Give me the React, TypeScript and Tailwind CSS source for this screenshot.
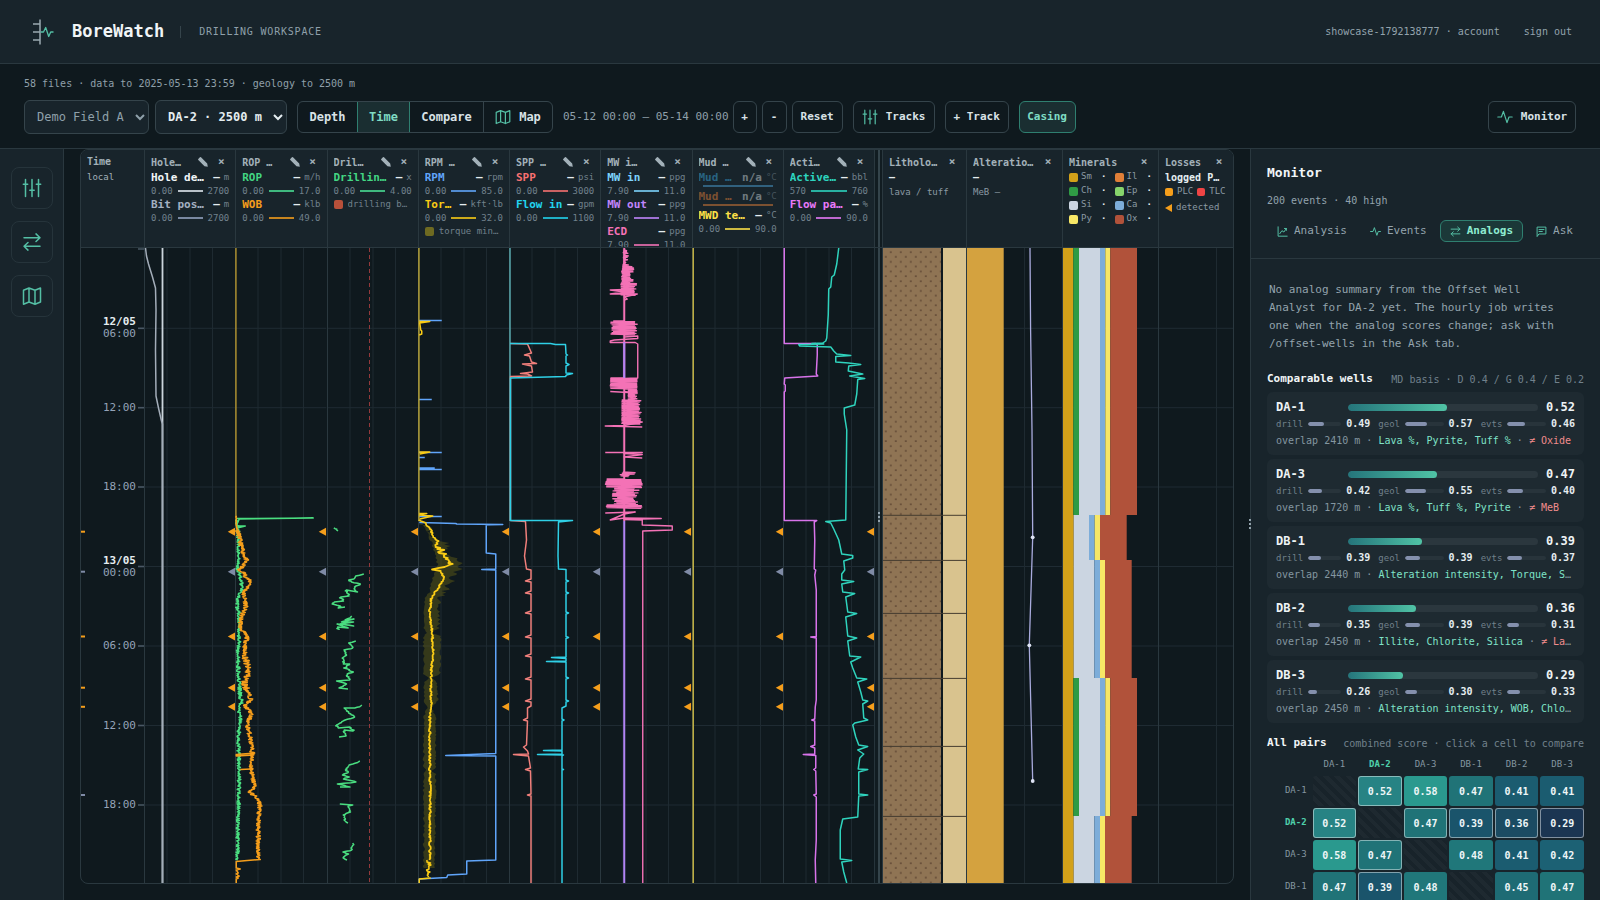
import type { ReactNode } from "react";

/* ---------- icons ---------- */

type IconProps = { className: string; weight?: number };

function Icon({ className, weight = 1.5, children }: IconProps & { children: ReactNode }) {
  return (
    <svg
      viewBox="0 0 20 20"
      fill="none"
      stroke="currentColor"
      strokeWidth={weight}
      strokeLinecap="round"
      strokeLinejoin="round"
      aria-hidden="true"
      className={`shrink-0 text-[#54bfa5] ${className}`}
    >
      {children}
    </svg>
  );
}

const SlidersIcon = (p: IconProps) => (
  <Icon {...p}>
    <path d="M3.5 1.5v17M10 1.5v17M16.5 1.5v17M1.3 6.3h4.4M7.8 12.3h4.4M14.3 6.3h4.4" />
  </Icon>
);
const SwapIcon = (p: IconProps) => (
  <Icon {...p}>
    <path d="M2 5.7h16M14 1.9l4 3.8-4 3.8M18 14.3H2M6 10.5l-4 3.8 4 3.8" />
  </Icon>
);
const MapIcon = (p: IconProps) => (
  <Icon {...p}>
    <path d="M1.5 4.2 7 2l6 2.2L18.5 2v14L13 18.200l-6-2.200-5.500 2.200zM7 2v14M13 4.200v14" />
  </Icon>
);
const PulseIcon = (p: IconProps) => (
  <Icon {...p}>
    <path d="M1 10h4.500L8 3l4.500 14L15 10h4" />
  </Icon>
);
const ChartIcon = (p: IconProps) => (
  <Icon {...p}>
    <path d="M2 1.500v17h16.500M5 14l4-5.500 3.500 2.500L17 4.500M13.500 4.500H17V8" />
  </Icon>
);
const ChatIcon = (p: IconProps) => (
  <Icon {...p}>
    <path d="M2 18.500V2h16v12.500H6zM5.500 6.500h9M5.500 10h6" />
  </Icon>
);

/* ---------- curve helpers ---------- */

type Pt = [number, number];

const TOP = 248;
const PLOT_HEIGHT = 635;
const BOTTOM = TOP + PLOT_HEIGHT;
const TICKS = [328.3, 407.7, 487, 566.5, 646, 725.5, 805];

function rng(seed: number) {
  let s = seed;
  return () => {
    s = (s * 16807) % 2147483647;
    return s / 2147483647;
  };
}

const toPath = (pts: Pt[]) => "M" + pts.map(([x, y]) => `${x.toFixed(1)} ${y.toFixed(1)}`).join("L");

function noisy(pts: Pt[], amp: number | ((y: number) => number), seed: number, step = 1): Pt[] {
  const r = rng(seed);
  const out: Pt[] = [];
  for (let i = 0; i < pts.length - 1; i++) {
    const [x1, y1] = pts[i];
    const [x2, y2] = pts[i + 1];
    const n = Math.max(1, Math.round(Math.abs(y2 - y1) / step));
    for (let k = 0; k < n; k++) {
      const y = y1 + ((y2 - y1) * k) / n;
      const a = typeof amp === "number" ? amp : amp(y);
      out.push([x1 + ((x2 - x1) * k) / n + (r() - 0.5) * 2 * a, y]);
    }
  }
  out.push(pts[pts.length - 1]);
  return out;
}

function burst(y0: number, y1: number, mid: number, left: number, right: number, fill: number, seed: number): Pt[] {
  const r = rng(seed);
  const out: Pt[] = [[mid, y0]];
  for (let y = y0; y < y1; y += 1.3) {
    out.push([mid - left * (fill + (1 - fill) * r()), y]);
    out.push([mid + right * (fill + (1 - fill) * r()), y + 0.7]);
  }
  out.push([mid, y1]);
  return out;
}

const parse = (s: string): Pt[] => s.split(" ").map((p) => p.split(",").map(Number) as Pt);

/* ---------- curves ---------- */

const bitPosition = parse("146,248 147,256 149,264 153,277 156,288 156.5,310 156,350 156.5,396 159,408 162,421 163,424 163,883");

const wob = noisy(
  parse(
    "237,516 237,525 240,537 243,550 247,560 242,568 238,570 244,572 247,577 252,583 244,593 247,605 242,617 241,628 248,637 245,650 249,673 245,683 252,700 245,705 252,713 248,725 251,737 253,753 252,760 252,767 253,777 256,787 250,792 257,797 261,805 259,817 259,858",
  ),
  (y) => (y < 530 ? 0.4 : y > 655 && y < 690 ? 3.4 : 2.2),
  11,
  0.5,
);
const wobTail = parse("259,858 261,859.500 248,860.500 237,861.500 237,868 241,869 237,870 239,873 237,874 240,876 237,877 239,878 237,879 237,883");
const rop = noisy(
  parse(
    "237,520 238,525 239,530 239,560 238,568 242,580 243,590 237.500,600 238,608 240,616 240,640 238.500,655 240,685 241,698 243,702 239,706 241,718 239,740 239.500,752 240,780 238.500,830 238.500,860",
  ),
  1.8,
  5,
  0.6,
);

const drillExponent = [
  "335,528 336,530 338,531",
  "365,574 355,576 353,579 348,580 352,582 361,584 354,587 357,592 346,590 349,596 340,597 344,601 334,602 331,604 341,606 338,608 345,607",
  "353,616 344,620 353,619 341,622 354,622 341,624 354,626 338,624 348,628 337,627 339,630",
  "357,641 348,643 353,648 345,650 346,656 343,658 344,664 349,664 345,668 353,672 346,674 350,680 336,681 347,684 340,688 348,689",
  "363,705 361,706 354,708 343,708 351,714 355,717 346,720 336,725 339,728 349,727 354,731 344,730 345,736 339,737",
  "361,761 352,764 348,765 346,770 349,772 342,775 350,777 343,779 357,782 338,784 350,787 340,787",
  "341,804 353,805 347,806 350,812 344,815 345,820 348,823",
  "354,843 350,848 352,850 344,852 348,854 343,857 347,860",
].map((s) => toPath(noisy(parse(s), 1.2, 41, 0.8)));

const rpm = parse(
  "419.500,522.500 456,523.500 457,524 503,524.500 486.500,525 486.500,553 496,554 496,569 482,569.500 496,570 496,753.500 446,755.500 496,756 496,860 467,861 467,874 448,875 447,877.500 419.500,879 419.500,883",
);
const torque = noisy(
  parse(
    "420,520 426,523 431,530 434,537 437,542 440,548 444,556 450,563 446,567 432,569.500 441,571 444,578 440,586 435,593 431,600 430,612 432,630 433,645 433,658 432,663 431,680 431.500,700 430,715 430,760 430.500,800 430,860",
  ),
  (y) => (y > 538 && y < 568 ? 4 : 1),
  23,
);
const torqueTail = noisy(parse("430,860 429,877"), 3, 8);
const torqueBand = (() => {
  const rough = (y: number) => (y < 600 ? 5 : y < 632 ? 2.5 : 1);
  const left = noisy(
    parse("424,524 430,538 435,552 438,566 432,580 430,592 425,598 424,628 428,633 424,636 424,674 429,678 424,682 424,700 427,708 424,718 424,768 427,771 424,774 424,868"),
    1.2,
    31,
    2,
  );
  const right = noisy(
    parse("424,524 436,538 447,543 444,552 463,563 454,575 449,584 444,594 440,600 439,628 431,633 441,636 440,674 432,678 437,682 438,700 432,708 436,718 436,768 432,771 436,774 435,868"),
    rough,
    37,
    1.5,
  );
  return toPath([...left, ...right.reverse()]);
})();

const flowIn = (() => {
  const head =
    "510.500,343.500 551,343.500 556,344.500 566,344.500 566.500,354 568,355 566.500,356 566.500,363 569.500,364.500 566.500,366 566.500,373 573,373.500 567,375 566,376.500 511,378 511,520.500 573,520.500 559,522 558.500,556 559,569 566.500,569.500";
  const spikes = [581, 593, 613, 637.5, 678, 701].map((y) => `566.500,${y - 1} 569,${y} 566.500,${y + 1}`);
  spikes.splice(4, 0, "566.500,657 552,657.500 566.500,658.500 566.500,661 547,661.500 566.500,662");
  return parse(
    `${head} ${spikes.join(" ")} 566.500,706 562.500,708 562.500,719 564.500,720 562.500,721 562.500,750 544,750.500 562.500,751 562.500,754 538,754.500 564,755 562.500,756 562.500,769 564,769.500 562.500,770 562.500,883`,
  );
})();
const spp = (() => {
  const spikes = [581, 593, 613, 637, 656, 679, 701].map((y) => `531.500,${y - 2} 526,${y} 531.500,${y + 1}`);
  return parse(
    `511,343.500 528,344 532,353 525,355 530,356 532,362 537,363.500 523,364 532,366 533,372 521,373.500 528,374 532,376 511,376.500 511,520.500 526,521.500 527,540 526,548 525,556 527,569 531.500,570 ${spikes.join(" ")} 531.500,706 528,708 528,718 524,720 528,721 527,745 524,747 528,751 529,754 514,754.500 529,756 531,768 526,769.500 531,771 531.500,794 528,795 531.500,796 531.500,883`,
  );
})();

const ecd = (() => {
  const mid = 625;
  return [
    burst(250, 266, mid, 1.5, 5, 0.1, 3),
    burst(266, 283, mid, 3, 10, 0.5, 4),
    burst(283, 295, mid, 4, 13, 0.7, 6),
    parse("625,289.500 611,290 625,292 611,294 638,294 625,297 628,299 625,300"),
    burst(321, 335, mid, 14, 13, 0.75, 9),
    parse("625,337 638.500,336 638.500,338.500 615,340 611,341 611,342.500 636,342.500 638.500,344 638.500,378 611,379"),
    burst(378, 389, mid, 14, 13, 0.95, 12),
    parse("611,391.500 638,393 625,392"),
    burst(389, 402, 630, 1, 8, 0.6, 13),
    burst(400, 424, mid, 2.5, 17, 0.8, 14),
    parse("625,421 643,422 625,425.500 606,426 643,427"),
    parse("606,452.500 643,452.500 625,453.500 643,454.500 625,457 643,458"),
    burst(472, 476, mid, 4, 11, 0.2, 15),
    burst(479, 487, mid, 19, 18, 0.9, 16),
    burst(487, 505, mid, 12, 15, 0.5, 18),
    burst(505, 508, mid, 19, 18, 0.9, 19),
    parse("606,513 636,512 625,514 611,520 625,518 662,518.500 625,519.500 643,520 643,525 673,526 673,530 643.500,531 643.500,883"),
  ].map(toPath);
})();

const flowPaddle = parse(
  "784.500,248 784.500,343.500 816,343.500 817.500,345 817.500,355 816.500,374 818,376 785,378 784.500,384 785.500,385 785.500,391 784.500,392 784.500,520.500 817,520.500 814.500,522 815,540 814.500,569 816,570 815,575 816.500,590 816.500,636.500 811,637 816.500,638 816.500,700 815.500,707 815,719 812,720 815,721 815,745 811,746.500 815,748 815,754 803.500,754.500 816,755.500 816,768 814,769.500 816,771 816.500,794 814,795 816.500,797 816.500,840 815.500,860 816,883",
);
const activePit = parse(
  "839,248 837,264 834.500,275 832,277 831,287 829,289 828.500,315 827,338 826,341 823,343 812,343.500 824,344 799,344.500 800,346 831,347 834,351 837,354 851,355.500 836,356.500 836,362 849,363 861,364.500 849,366 848.500,371 863,374 850,376 865,378.500 858,379.500 857,394 855,405 844.500,408 844.500,414 847,430 846,520 826,521.500 831,523 834,529 839,540 842,554 853,555.500 853,558 844,561 845,570 842,574 842,580 854,581.500 842,584 843,592 855,593.500 846,597 848,612 857,613.500 846,617 848,636 857,638 848,641 850,656 861,657 851,662 853,668 857,678 867,679 858,682 861,692 863,700 868,701 863,704 864,718 868,720 855,723 853,725 856,737 859,745 868,746.500 858,750 864,754 860,758 858.500,769 868,769.500 859,772 859,794 868,795 859,796 858,817 843,819 840.500,830 840.500,859 852,860.500 842,862 844,872 847,883",
);

/* ---------- plot building blocks ---------- */

function Curve({ d, color, width = 1.5, dash }: { d: string; color: string; width?: number; dash?: string }) {
  return (
    <path d={d} fill="none" stroke={color} strokeWidth={width} strokeDasharray={dash} strokeLinejoin="round" vectorEffect="non-scaling-stroke" />
  );
}

const vline = (x: number, from = TOP, to = BOTTOM) => `M${x} ${from}V${to}`;

function Plot({ x, width, splits = [], children }: { x: number; width: number; splits?: number[]; children?: ReactNode }) {
  return (
    <div className="relative min-h-0 min-w-0">
      <svg viewBox={`${x} ${TOP} ${width} ${PLOT_HEIGHT}`} preserveAspectRatio="none" className="absolute inset-0 h-full w-full">
        {TICKS.map((y) => (
          <Curve key={y} d={`M${x} ${y}h${width}`} color="#1f2b33" width={1} />
        ))}
        {splits.map((s) => (
          <Curve key={s} d={vline(x + s)} color="#1e2a31" width={1} />
        ))}
        <Curve d={vline(x + 0.5)} color="#2a383f" width={1} />
        {children}
      </svg>
    </div>
  );
}

const TRACK_W = 91.25;
const trackX = (i: number) => 144.5 + TRACK_W * i;
const EVENTS = [
  { y: 531.7, color: "#f59e1b" },
  { y: 571.7, color: "#7f8ba6" },
  { y: 636.5, color: "#f59e1b" },
  { y: 687.7, color: "#f59e1b" },
  { y: 706.8, color: "#f59e1b" },
];

function TrackPlot({ index, children }: { index: number; children?: ReactNode }) {
  const x = trackX(index);
  const end = x + TRACK_W - 0.2;
  return (
    <Plot x={x} width={TRACK_W} splits={[23, 46, 68.5]}>
      {children}
      {EVENTS.map((e) => (
        <path key={e.y} d={`M${end - 7.3} ${e.y}l7.300-4v8z`} fill={e.color} />
      ))}
    </Plot>
  );
}

const mineralSets = {
  rich: [
    [1063, 10.3, "#d3a119"],
    [1073.3, 5.7, "#2f9b45"],
    [1079, 21, "#cbd5e1"],
    [1100, 5.3, "#7dadd9"],
    [1105.3, 5, "#f7e766"],
    [1110.3, 26.7, "#b1523a"],
  ],
  thin: [
    [1063, 10.7, "#d3a119"],
    [1073.7, 15.3, "#cbd5e1"],
    [1089, 5.7, "#7dadd9"],
    [1094.7, 5.3, "#f7e766"],
    [1100, 26.7, "#b1523a"],
  ],
  mid: [
    [1063, 10.7, "#d3a119"],
    [1073.7, 20.6, "#cbd5e1"],
    [1094.3, 5.7, "#7dadd9"],
    [1100, 5, "#f7e766"],
    [1105, 26.7, "#b1523a"],
  ],
} as const;
const mineralLayers = [
  { from: 248, to: 515, set: mineralSets.rich },
  { from: 515, to: 560, set: mineralSets.thin },
  { from: 560, to: 678, set: mineralSets.mid },
  { from: 678, to: 816, set: mineralSets.rich },
  { from: 816, to: 883, set: mineralSets.mid },
];

/* ---------- track headers ---------- */

function Pencil() {
  return (
    <svg viewBox="0 0 10 10" className="h-2.5 w-2.5" fill="#a3b1b9" aria-hidden="true">
      <path d="M.3 1.900 1.900.3a.8.8 0 0 1 1.100 0L4 1.300 1.300 4 .3 3a.8.8 0 0 1 0-1.100zM1.300 4 4 1.300 9.200 6.500l.6 3.300-3.300-.6z" />
    </svg>
  );
}

function HeadCell({ title, edit, children }: { title: string; edit?: boolean; children: ReactNode }) {
  return (
    <div className="min-w-0 overflow-hidden border-l border-[#2a383f] px-[6px] pt-1">
      <div className="flex h-4 items-center pr-0.5">
        <span className="min-w-0 flex-1 truncate text-[10px] font-bold text-[#a3b1b9]">{title}</span>
        {edit && (
          <button type="button" aria-label={`Edit ${title}`} className="mr-1 ml-3">
            <Pencil />
          </button>
        )}
        <button type="button" aria-label={`Remove ${title}`} className="ml-[3px] w-3 text-center text-[11px] leading-4 font-bold text-[#a3b1b9]">
          ×
        </button>
      </div>
      {children}
    </div>
  );
}

type CurveRow = { name: string; unit: string; lo: string; hi: string; text: string; bar: string };

function CurveLegend({ name, unit, lo, hi, text, bar }: CurveRow) {
  return (
    <div>
      <div className="flex h-[15px] items-center text-[9px]">
        <span className={`min-w-0 flex-1 truncate text-[11px] leading-[15px] font-bold ${text}`}>{name}</span>
        <span className="mx-1 text-[11px] leading-[15px] font-bold text-[#e5edf0]">–</span>
        <span className="text-[#71818b]">{unit}</span>
      </div>
      <div className="flex h-3 items-center gap-[5px] text-[9px] leading-3 text-[#71818b]">
        <span>{lo}</span>
        <span className={`h-0.5 flex-1 opacity-80 ${bar}`} />
        <span>{hi}</span>
      </div>
    </div>
  );
}

function MissingLegend({ text, bar }: { text: string; bar: string }) {
  return (
    <div className="h-[19px] opacity-50">
      <div className="flex h-[15px] items-center text-[11px] leading-[15px] font-bold">
        <span className={`min-w-0 flex-1 truncate ${text}`}>Mud temp</span>
        <span className="mx-1 text-[#c6d0d5]">n/a</span>
        <span className="text-[9px] font-normal text-[#71818b]">°C</span>
      </div>
      <div className={`mx-1 h-0.5 ${bar}`} />
    </div>
  );
}

function Band({ color, label }: { color: string; label: string }) {
  return (
    <div className="flex h-[15px] items-center gap-[5px] pr-[3px] text-[9px] text-[#71818b]">
      <span className={`h-[9px] w-[9px] shrink-0 rounded-[2px] ${color}`} />
      <span className="truncate">{label}</span>
    </div>
  );
}

const heads: { title: string; rows: CurveRow[]; band?: { color: string; label: string } }[] = [
  {
    title: "Hole depth",
    rows: [
      { name: "Hole depth", unit: "m", lo: "0.00", hi: "2700", text: "text-[#f1f5f7]", bar: "bg-[#e2e8f0]" },
      { name: "Bit position", unit: "m", lo: "0.00", hi: "2700", text: "text-[#a4b0c2]", bar: "bg-[#94a3c0]" },
    ],
  },
  {
    title: "ROP / WOB",
    rows: [
      { name: "ROP", unit: "m/h", lo: "0.00", hi: "17.0", text: "text-[#43d683]", bar: "bg-[#4ade95]" },
      { name: "WOB", unit: "klb", lo: "0.00", hi: "49.0", text: "text-[#f59e1b]", bar: "bg-[#f59e1b]" },
    ],
  },
  {
    title: "Drilling exponent",
    rows: [{ name: "Drilling exponent", unit: "x", lo: "0.00", hi: "4.00", text: "text-[#43d683]", bar: "bg-[#4ade95]" }],
    band: { color: "bg-[#b8503a]", label: "drilling break" },
  },
  {
    title: "RPM / Torque",
    rows: [
      { name: "RPM", unit: "rpm", lo: "0.00", hi: "85.0", text: "text-[#60a5fa]", bar: "bg-[#60a5fa]" },
      { name: "Torque", unit: "kft·lb", lo: "0.00", hi: "32.0", text: "text-[#facc15]", bar: "bg-[#facc15]" },
    ],
    band: { color: "bg-[#6e6a21]", label: "torque min/max" },
  },
  {
    title: "SPP / Flow",
    rows: [
      { name: "SPP", unit: "psi", lo: "0.00", hi: "3000", text: "text-[#f87171]", bar: "bg-[#f87171]" },
      { name: "Flow in", unit: "gpm", lo: "0.00", hi: "1100", text: "text-[#22d3ee]", bar: "bg-[#22d3ee]" },
    ],
  },
  {
    title: "MW in/out",
    rows: [
      { name: "MW in", unit: "ppg", lo: "7.90", hi: "11.0", text: "text-[#7dd3fc]", bar: "bg-[#7dd3fc]" },
      { name: "MW out", unit: "ppg", lo: "7.90", hi: "11.0", text: "text-[#c084fc]", bar: "bg-[#c084fc]" },
      { name: "ECD", unit: "ppg", lo: "7.90", hi: "11.0", text: "text-[#f472b6]", bar: "bg-[#f472b6]" },
    ],
  },
  {
    title: "Mud temp",
    rows: [{ name: "MWD temp", unit: "°C", lo: "0.00", hi: "90.0", text: "text-[#fde047]", bar: "bg-[#fde047]" }],
  },
  {
    title: "Active pits",
    rows: [
      { name: "Active pit", unit: "bbl", lo: "570", hi: "760", text: "text-[#2dd4bf]", bar: "bg-[#2dd4bf]" },
      { name: "Flow paddle", unit: "%", lo: "0.00", hi: "90.0", text: "text-[#e879f9]", bar: "bg-[#e879f9]" },
    ],
  },
];

const mineralKeys = [
  ["Sm", "bg-[#d3a119]"],
  ["Il", "bg-[#e07f38]"],
  ["Ch", "bg-[#2f9b45]"],
  ["Ep", "bg-[#86d46b]"],
  ["Si", "bg-[#cbd5e1]"],
  ["Ca", "bg-[#7dadd9]"],
  ["Py", "bg-[#f7e766]"],
  ["Ox", "bg-[#b1523a]"],
];

const GRID = "grid grid-cols-[63px_repeat(8,minmax(0,1fr))_8px_84px_96px_96px_75px]";

const timeLabels = [
  { y: 328.3, time: "06:00", date: "12/05" },
  { y: 407.7, time: "12:00" },
  { y: 487, time: "18:00" },
  { y: 566.5, time: "00:00", date: "13/05" },
  { y: 646, time: "06:00" },
  { y: 725.5, time: "12:00" },
  { y: 805, time: "18:00" },
];

function TimeAxis() {
  return (
    <div className="relative min-h-0 min-w-0">
      <svg viewBox={`81 ${TOP} 63 ${PLOT_HEIGHT}`} preserveAspectRatio="none" className="absolute inset-0 h-full w-full">
        {[249, ...TICKS].map((y) => (
          <Curve key={y} d={`M138 ${y}h6`} color="#4a5865" width={1.6} />
        ))}
        {[...EVENTS, { y: 795, color: "#7f8ba6" }].map((e) => (
          <Curve key={e.y} d={`M81 ${e.y}h4`} color={e.color} width={2} />
        ))}
      </svg>
      {timeLabels.map((t) => (
        <div
          key={t.y}
          className="absolute right-2 -translate-y-1/2 text-right text-[11px] leading-3 text-[#94a3b8]"
          style={{ top: `${((t.y - TOP) / PLOT_HEIGHT) * 100}%` }}
        >
          {t.date && <div className="font-bold text-[#e5edf0]">{t.date}</div>}
          <div>{t.time}</div>
        </div>
      ))}
    </div>
  );
}

function Chart() {
  return (
    <section className="flex min-h-0 flex-1 flex-col overflow-hidden rounded-lg border border-[#2a383f]">
      <div className={`${GRID} h-[98px] shrink-0 border-b border-[#2a383f] bg-[#18242b]`}>
        <div className="px-[6px] pt-1 text-[#a3b1b9]">
          <div className="h-4 text-[10px] leading-4 font-bold">Time</div>
          <div className="text-[9px] leading-[15px]">local</div>
        </div>
        {heads.map((h) => (
          <HeadCell key={h.title} title={h.title} edit>
            {h.title === "Mud temp" && (
              <>
                <MissingLegend text="text-[#38a3d8]" bar="bg-[#4b9ed0]" />
                <MissingLegend text="text-[#e07f38]" bar="bg-[#e07f38]" />
              </>
            )}
            {h.rows.map((r) => (
              <CurveLegend key={r.name} {...r} />
            ))}
            {h.band && <Band {...h.band} />}
          </HeadCell>
        ))}
        <div className="flex justify-center border-l border-[#2a383f] bg-[#111c21]">
          <span className="w-0.5 bg-[#34444b]" />
        </div>
        <HeadCell title="Lithology">
          <div className="text-[10px] leading-[15px] font-bold text-[#e5edf0]">–</div>
          <div className="text-[9px] leading-[15px] text-[#8b9aa3]">lava / tuff</div>
        </HeadCell>
        <HeadCell title="Alteration intensity">
          <div className="text-[10px] leading-[15px] font-bold text-[#e5edf0]">–</div>
          <div className="text-[9px] leading-[15px] text-[#8b9aa3]">MeB –</div>
        </HeadCell>
        <HeadCell title="Minerals">
          <div className="grid grid-cols-2 gap-x-2">
            {mineralKeys.map(([name, color]) => (
              <div key={name} className="flex h-[14px] items-center gap-[3px] text-[9px] text-[#8b9aa3]">
                <span className={`h-[9px] w-[9px] rounded-[2px] ${color}`} />
                <span className="flex-1">{name}</span>
                <span className="font-bold text-[#e5edf0]">·</span>
              </div>
            ))}
          </div>
        </HeadCell>
        <HeadCell title="Losses">
          <div className="truncate pr-1 text-[10px] leading-[15px] font-bold text-[#e5edf0]">logged PLC / TLC</div>
          <div className="flex h-[13px] items-center gap-1 text-[9px] text-[#8b9aa3]">
            <span className="h-2 w-2 rounded-[2px] bg-[#f59e1b]" />
            PLC
            <span className="h-2 w-2 rounded-[2px] bg-[#ef4444]" />
            TLC
          </div>
          <div className="mt-0.5 flex h-4 items-center gap-1 text-[9px] text-[#8b9aa3]">
            <svg viewBox="0 0 7 8" className="h-2 w-[7px]" aria-hidden="true">
              <path d="M0 4 7 0v8z" fill="#f59e1b" />
            </svg>
            detected
          </div>
        </HeadCell>
      </div>

      <div className={`${GRID} min-h-0 flex-1 grid-rows-[minmax(0,1fr)]`}>
        <TimeAxis />
        <TrackPlot index={0}>
          <Curve d={vline(163)} color="#cbd5dc" width={1.8} />
          <Curve d={toPath(bitPosition)} color="#a3adb9" />
        </TrackPlot>
        <TrackPlot index={1}>
          <Curve d={vline(236.700, TOP, 517)} color="#cda52b" width={1.2} />
          <Curve d="M237 518.500L314 518L240 519L237 526L246 526L238 528" color="#4ade80" />
          <Curve d={toPath(rop)} color="#4ade80" />
          <Curve d={toPath(wob)} color="#f59e1b" />
          <Curve d="M256 753L237 754.500L237 756L255 755M252 769L241 769.500" color="#f59e1b" />
          <Curve d={toPath(wobTail)} color="#f59e1b" />
        </TrackPlot>
        <TrackPlot index={2}>
          <Curve d={vline(369.500)} color="#93393b" width={1} dash="4 3" />
          {drillExponent.map((d) => (
            <Curve key={d} d={d} color="#4ade80" />
          ))}
        </TrackPlot>
        <TrackPlot index={3}>
          <path d={torqueBand} fill="#6e6a14" fillOpacity={0.4} />
          <Curve
            d="M419.500 320.500L442 320.500M419.500 399.500H432M419.500 452.500H442M419.500 457.500H425M419.500 468H435M419.500 469.500H442M419.500 516.500H442"
            color="#60a5fa"
          />
          <Curve d={toPath(rpm)} color="#60a5fa" />
          <Curve d={vline(419.200, TOP, 521)} color="#dcc13a" width={1.2} />
          <Curve d="M419.500 321.500H430L420 323L421 330L422 331V334L419.500 335M419.500 452H430L420 454M419.500 513.500H427L420 515L433 516L420 519" color="#facc15" />
          <Curve d={toPath(torque)} color="#facc15" width={1.8} />
          <Curve d={toPath(torqueTail)} color="#facc15" />
          <Curve d="M431 878L419.500 879V883" color="#facc15" />
        </TrackPlot>
        <TrackPlot index={4}>
          <Curve d={vline(510.500, TOP, 521)} color="#5aa9ae" />
          <Curve d={toPath(spp)} color="#f07f7b" />
          <Curve d={toPath(flowIn)} color="#2fd0e6" />
        </TrackPlot>
        <TrackPlot index={5}>
          <Curve d={vline(625, TOP, 521)} color="#f472b6" width={2} />
          {ecd.map((d) => (
            <Curve key={d} d={d} color="#f472b6" width={1.4} />
          ))}
          <Curve d={vline(625, 342, 378) + vline(625, 521)} color="#b184f5" width={2} />
        </TrackPlot>
        <TrackPlot index={6}>
          <Curve d={vline(693.200)} color="#ddc94a" width={1.3} />
        </TrackPlot>
        <TrackPlot index={7}>
          <Curve d={toPath(flowPaddle)} color="#d873ea" />
          <Curve d={toPath(activePit)} color="#2fd3bd" />
        </TrackPlot>

        <div className="flex items-center justify-center border-l border-[#26343b] bg-[#111c21]">
          <div className="relative h-full w-0.5 bg-[#34444b]">
            <div className="absolute top-[264px] left-0 grid w-0.5 gap-0.5">
              <i className="h-0.5 bg-[#93a3ad]" />
              <i className="h-0.5 bg-[#93a3ad]" />
              <i className="h-0.5 bg-[#93a3ad]" />
            </div>
          </div>
        </div>

        <Plot x={882} width={84}>
          <defs>
            <pattern id="vesicles" width="10" height="9.700" patternUnits="userSpaceOnUse" patternTransform="translate(883 248)">
              <rect width="10" height="9.700" fill="#8f7454" />
              <rect x="6.800" y="3.300" width="2" height="1.700" fill="#69503a" />
              <rect x="1.800" y="8" width="2" height="1.700" fill="#69503a" />
            </pattern>
          </defs>
          <rect x={883} y={TOP} width={58} height={PLOT_HEIGHT} fill="url(#vesicles)" />
          <rect x={941} y={TOP} width={2} height={PLOT_HEIGHT} fill="#0f191e" />
          <rect x={943} y={TOP} width={23} height={PLOT_HEIGHT} fill="#d9c38e" />
          {[515.3, 560.4, 613.4, 678.4, 746.4, 816.4].map((y) => (
            <Curve key={y} d={`M883 ${y}h83`} color="#453c2f" width={1} />
          ))}
        </Plot>
        <Plot x={966} width={96} splits={[58.500]}>
          <rect x={967} y={TOP} width={36.700} height={PLOT_HEIGHT} fill="#d4a23f" />
          <Curve d="M1030 248L1030.600 330L1032 430L1032.700 537.300L1029.300 645.300L1032.700 781" color="#a9abdd" width={1.3} />
          {parse("1032.700,537.300 1029.300,645.300 1032.700,781").map(([cx, cy]) => (
            <circle key={cy} cx={cx} cy={cy} r={1.900} fill="#dfe4f5" />
          ))}
        </Plot>
        <Plot x={1062} width={96}>
          {mineralLayers.map((l) =>
            l.set.map(([x, w, color]) => <rect key={`${l.from}-${x}`} x={x} y={l.from} width={w} height={l.to - l.from} fill={color} />),
          )}
        </Plot>
        <Plot x={1158} width={75} splits={[58.500]} />
      </div>
    </section>
  );
}

/* ---------- monitor panel ---------- */

const wells = [
  { name: "DA-1", score: "0.52", drill: "0.49", geol: "0.57", evts: "0.46", overlap: 2410, like: "Lava %, Pyrite, Tuff %", unlike: "Oxide" },
  { name: "DA-3", score: "0.47", drill: "0.42", geol: "0.55", evts: "0.40", overlap: 1720, like: "Lava %, Tuff %, Pyrite", unlike: "MeB" },
  { name: "DB-1", score: "0.39", drill: "0.39", geol: "0.39", evts: "0.37", overlap: 2440, like: "Alteration intensity, Torque, Silica", unlike: "" },
  { name: "DB-2", score: "0.36", drill: "0.35", geol: "0.39", evts: "0.31", overlap: 2450, like: "Illite, Chlorite, Silica", unlike: "Lava %" },
  { name: "DB-3", score: "0.29", drill: "0.26", geol: "0.30", evts: "0.33", overlap: 2450, like: "Alteration intensity, WOB, Chlorite", unlike: "" },
];

function Part({ label, value }: { label: string; value: string }) {
  return (
    <div className="flex flex-1 items-center gap-[5px]">
      <span className="text-[9px] text-[#71818b]">{label}</span>
      <span className="h-1 flex-1 overflow-hidden rounded-full bg-[#28343b]">
        <span className="block h-full rounded-full bg-[#8490ad]" style={{ width: `${Number(value) * 100}%` }} />
      </span>
      <span className="text-[10px] font-bold text-[#e5edf0]">{value}</span>
    </div>
  );
}

function WellCard({ w }: { w: (typeof wells)[number] }) {
  return (
    <article className="grid gap-px rounded-md bg-[#1e2a31] px-[9px] py-[7px] leading-4">
      <div className="flex items-center text-[12px] font-bold text-[#eef3f5]">
        <h3 className="w-[72px] leading-4">{w.name}</h3>
        <div className="h-[7px] flex-1 overflow-hidden rounded-full bg-[#2b373e]">
          <div className="h-full rounded-full bg-linear-to-r from-[#25757b] to-[#50c3a5]" style={{ width: `${Number(w.score) * 100}%` }} />
        </div>
        <span className="ml-2">{w.score}</span>
      </div>
      <div className="flex gap-2">
        <Part label="drill" value={w.drill} />
        <Part label="geol" value={w.geol} />
        <Part label="evts" value={w.evts} />
      </div>
      <p className="h-[15px] truncate text-[10px] leading-[15px] text-[#8496a0]">
        overlap {w.overlap} m · <span className="text-[#7fe3c8]">{w.like}</span>
        {w.unlike && (
          <>
            {" · "}
            <span className="text-[#f08c8c]">≠ {w.unlike}</span>
          </>
        )}
      </p>
    </article>
  );
}

const names = ["DA-1", "DA-2", "DA-3", "DB-1", "DB-2", "DB-3"];
const scores = [
  ["", "0.52", "0.58", "0.47", "0.41", "0.41"],
  ["0.52", "", "0.47", "0.39", "0.36", "0.29"],
  ["0.58", "0.47", "", "0.48", "0.41", "0.42"],
  ["0.47", "0.39", "0.48", "", "0.45", "0.47"],
  ["0.41", "0.36", "0.41", "0.45", "", "0.52"],
  ["0.41", "0.29", "0.42", "0.47", "0.52", ""],
];
const shade: Record<string, string> = {
  "0.58": "bg-[#2a998e]",
  "0.52": "bg-[#278384]",
  "0.48": "bg-[#20777a]",
  "0.47": "bg-[#207377]",
  "0.45": "bg-[#1e6b74]",
  "0.42": "bg-[#1c6174]",
  "0.41": "bg-[#1b5c70]",
  "0.39": "bg-[#1a546b]",
  "0.36": "bg-[#1b4b62]",
  "0.29": "bg-[#1b3552]",
};

function PairTable() {
  return (
    <table className="-mx-0.5 w-[calc(100%+4px)] table-fixed border-separate border-spacing-0.5 text-[9px]">
      <thead>
        <tr>
          <td />
          {names.map((n) => (
            <th key={n} scope="col" className={`h-[19px] ${n === "DA-2" ? "font-bold text-[#4fd1ab]" : "font-normal text-[#8496a0]"}`}>
              {n}
            </th>
          ))}
        </tr>
      </thead>
      <tbody>
        {scores.map((row, r) => (
          <tr key={names[r]}>
            <th scope="row" className={`pr-1 text-right ${r === 1 ? "font-bold text-[#4fd1ab]" : "font-normal text-[#8496a0]"}`}>
              {names[r]}
            </th>
            {row.map((v, c) => (
              <td key={names[c]} className="h-[30px] p-0">
                {v ? (
                  <button
                    type="button"
                    aria-label={`Compare ${names[r]} with ${names[c]}: ${v}`}
                    className={`block h-[30px] w-full rounded-[3px] border text-[10px] font-bold text-[#eef6f7] ${shade[v]} ${
                      r === 1 || c === 1 ? "border-white/45" : "border-transparent"
                    }`}
                  >
                    {v}
                  </button>
                ) : (
                  <div className="h-[30px] rounded-[3px] bg-[repeating-linear-gradient(45deg,#18232a_0_4px,#1e2930_4px_8px)]" />
                )}
              </td>
            ))}
          </tr>
        ))}
      </tbody>
    </table>
  );
}

function Tab({ icon, label, active }: { icon: ReactNode; label: string; active?: boolean }) {
  return (
    <button
      type="button"
      role="tab"
      aria-selected={!!active}
      className={`flex h-[22px] items-center gap-[6px] rounded-md border px-[9px] text-[11px] ${
        active ? "border-[#2f7f70] bg-[#1b3838] font-bold text-[#8debd0]" : "border-transparent text-[#93a3ad]"
      }`}
    >
      {icon}
      {label}
    </button>
  );
}

function MonitorPanel() {
  return (
    <aside className="relative flex w-[350px] shrink-0 flex-col border-l border-[#2a383f] bg-[#18242b]">
      <div className="absolute top-[370px] -left-0.5 grid gap-0.5">
        <i className="h-0.5 w-0.5 bg-[#93a3ad]" />
        <i className="h-0.5 w-0.5 bg-[#93a3ad]" />
        <i className="h-0.5 w-0.5 bg-[#93a3ad]" />
      </div>
      <div className="border-b border-[#2a383f] px-4 pt-4 pb-4">
        <h2 className="text-[13px] leading-4 font-bold text-[#f1f5f7]">Monitor</h2>
        <p className="mt-3 text-[10px] leading-4 text-[#93a3ad]">200 events · 40 high</p>
        <div role="tablist" className="mt-[11px] flex gap-[3px]">
          <Tab icon={<ChartIcon className="h-[11px] w-[11px]" weight={1.8} />} label="Analysis" />
          <Tab icon={<PulseIcon className="h-[11px] w-[11px]" weight={1.8} />} label="Events" />
          <Tab icon={<SwapIcon className="h-[11px] w-[11px]" weight={1.8} />} label="Analogs" active />
          <Tab icon={<ChatIcon className="h-[11px] w-[11px]" weight={1.8} />} label="Ask" />
        </div>
      </div>
      <div className="min-h-0 flex-1 overflow-hidden px-4 pt-[22px]">
        <p className="pr-3 pl-0.5 text-[11px] leading-[18px] text-[#93a3ad]">
          No analog summary from the Offset Well Analyst for DA-2 yet. The hourly job writes one when the analog scores change; ask with
          /offset-wells in the Ask tab.
        </p>
        <div className="mt-4 flex h-5 items-center justify-between">
          <h3 className="text-[11px] font-bold text-[#f1f5f7]">Comparable wells</h3>
          <span className="text-[10px] text-[#71818b]">MD basis · D 0.4 / G 0.4 / E 0.2</span>
        </div>
        <div className="mt-[3px] grid gap-1">
          {wells.map((w) => (
            <WellCard key={w.name} w={w} />
          ))}
        </div>
        <div className="mt-2.5 flex h-5 items-center justify-between">
          <h3 className="text-[11px] font-bold text-[#f1f5f7]">All pairs</h3>
          <span className="text-[10px] text-[#71818b]">combined score · click a cell to compare</span>
        </div>
        <PairTable />
      </div>
    </aside>
  );
}

/* ---------- page ---------- */

const toolBtn =
  "flex h-8 items-center justify-center rounded-md border border-[#35444b] text-[11px] font-bold text-[#d9e2e6]";

export default function App() {
  return (
    <div className="flex h-screen min-h-[640px] flex-col overflow-hidden bg-[#0f191e] font-['DejaVu_Sans_Mono','Liberation_Mono',monospace] text-[#d9e2e6]">
      <header className="flex h-16 shrink-0 items-center border-b border-[#2a383f] bg-[#18242b] pr-7 pl-8">
        <svg viewBox="0 0 22 26" className="h-[26px] w-[22px]" fill="none" aria-hidden="true">
          <path d="M8 .5v25M1 5h7M1 13h7M1 21h7" stroke="#9aa9b1" strokeWidth="1.500" />
          <path d="M8.500 13h3l2.200-4.500 3 9 2-4.500h2.800" stroke="#54bfa5" strokeWidth="1.300" strokeLinejoin="round" />
        </svg>
        <h1 className="ml-[18px] text-[17px] font-bold text-[#f1f5f7]">BoreWatch</h1>
        <span className="ml-4 h-3 w-px bg-[#35444b]" />
        <span className="ml-[18px] text-[10px] tracking-[0.08em] text-[#8fa0aa]">DRILLING WORKSPACE</span>
        <nav className="ml-auto flex gap-6 text-[10px] text-[#93a3ad]">
          <a href="#account">showcase-1792138777 · account</a>
          <a href="#sign-out">sign out</a>
        </nav>
      </header>

      <div className="shrink-0 border-b border-[#2a383f] px-6 pt-3 pb-[14px]">
        <p className="text-[10px] leading-4 text-[#8fa0aa]">58 files · data to 2025-05-13 23:59 · geology to 2500 m</p>
        <div className="mt-2 flex items-center">
          <select aria-label="Field" className="h-[34px] w-[125px] rounded-md border border-[#35444b] bg-[#18242b] pl-2 text-[12px] text-[#8fa0aa]">
            <option>Demo Field A</option>
          </select>
          <select
            aria-label="Well"
            className="ml-[6px] h-[34px] w-[132px] rounded-md border border-[#35444b] bg-[#18242b] pl-2 text-[12px] font-bold text-[#e5edf0]"
          >
            <option>DA-2 · 2500 m</option>
          </select>
          <div className="ml-2.5 flex h-8 overflow-hidden rounded-md border border-[#35444b] text-[12px] font-bold">
            <button type="button" className="w-[59px] text-center">
              Depth
            </button>
            <button type="button" aria-pressed="true" className="-my-px w-[53px] border border-[#2f7f70] bg-[#1a2e31] text-[#7fdcc4]">
              Time
            </button>
            <button type="button" className="w-[73px] text-center">
              Compare
            </button>
            <button type="button" className="flex w-[69px] items-center justify-center gap-2 border-l border-[#35444b]">
              <MapIcon className="h-4 w-4" />
              Map
            </button>
          </div>
          <span className="ml-2.5 text-[11px] text-[#8fa0aa]">05-12 00:00 – 05-14 00:00</span>
          <button type="button" aria-label="Zoom in" className={`${toolBtn} ml-1 w-6`}>
            +
          </button>
          <button type="button" aria-label="Zoom out" className={`${toolBtn} ml-[5px] w-[25px]`}>
            -
          </button>
          <button type="button" className={`${toolBtn} ml-[5px] w-[51px]`}>
            Reset
          </button>
          <button type="button" className={`${toolBtn} ml-2.5 w-[82px] gap-2`}>
            <SlidersIcon className="h-4 w-4" />
            Tracks
          </button>
          <button type="button" className={`${toolBtn} ml-2.5 w-16`}>
            + Track
          </button>
          <button
            type="button"
            aria-pressed="true"
            className="ml-2.5 h-8 w-[57px] rounded-md border border-[#2f7f70] bg-[#1a2e31] text-[11px] font-bold text-[#7fdcc4]"
          >
            Casing
          </button>
          <button type="button" className={`${toolBtn} ml-auto w-[88px] gap-2`}>
            <PulseIcon className="h-4 w-4" />
            Monitor
          </button>
        </div>
      </div>

      <div className="flex min-h-0 flex-1">
        <nav aria-label="Tools" className="flex w-16 shrink-0 flex-col items-center gap-3 border-r border-[#2a383f] bg-[#18242b] pt-[18px]">
          <button type="button" aria-label="Tracks" className="flex h-[42px] w-[42px] items-center justify-center rounded-lg border border-[#26343b]">
            <SlidersIcon className="h-5 w-5" />
          </button>
          <button type="button" aria-label="Compare" className="flex h-[42px] w-[42px] items-center justify-center rounded-lg border border-[#26343b]">
            <SwapIcon className="h-5 w-5" />
          </button>
          <button type="button" aria-label="Map" className="flex h-[42px] w-[42px] items-center justify-center rounded-lg border border-[#26343b]">
            <MapIcon className="h-5 w-5" />
          </button>
        </nav>
        <main className="flex min-w-0 flex-1 flex-col px-4 pb-4">
          <Chart />
        </main>
        <MonitorPanel />
      </div>
    </div>
  );
}
